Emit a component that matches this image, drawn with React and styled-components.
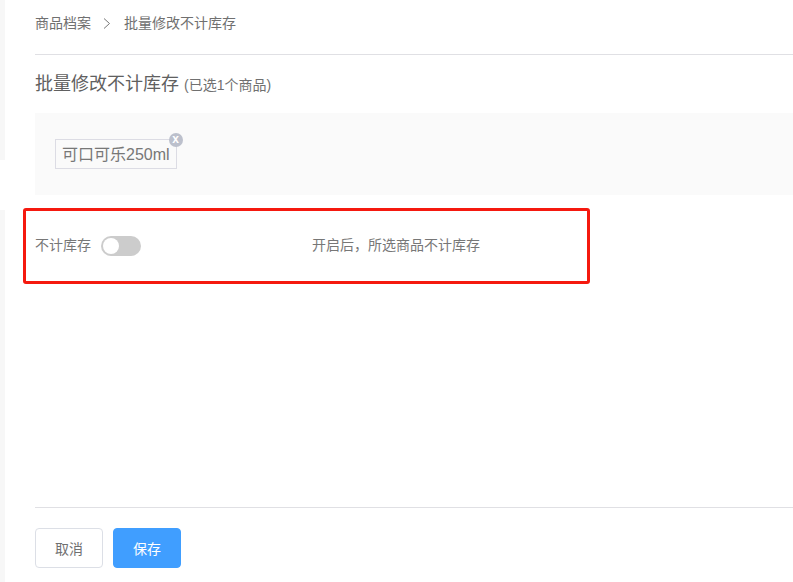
import React from "react";
import styled, { createGlobalStyle } from "styled-components";

const Global = createGlobalStyle`
  html, body { margin: 0; padding: 0; background: #fff; overflow: hidden; }
  * { box-sizing: border-box; }
  body { font-family: "Liberation Sans", "Noto Sans CJK SC", sans-serif; color: #666; }
`;

const Page = styled.div`
  width: 793px;
  height: 582px;
  display: flex;
  overflow: hidden;
`;

const Rail = styled.div`
  width: 5px;
  flex: none;
  display: flex;
  flex-direction: column;
  gap: 50px;
`;

const RailPiece = styled.div`
  background: #f7f7f7;
  height: ${(p) => p.$h}px;
  flex: none;
`;

const Main = styled.div`
  flex: 1;
  min-width: 0;
  display: flex;
  flex-direction: column;
  padding-left: 30px;
`;

const Crumbs = styled.nav`
  height: 55px;
  flex: none;
  border-bottom: 1px solid #e0e0e4;
  display: flex;
  align-items: flex-start;
  padding-top: 14px;
  font-size: 14px;
  line-height: 18px;
  color: #707070;
`;

const Chevron = styled.svg`
  width: 8px;
  height: 11px;
  margin: 4px 13px 0 12px;
  flex: none;
`;

const Heading = styled.div`
  height: 58px;
  flex: none;
  padding-top: 17px;
  display: flex;
  align-items: baseline;
  color: #606060;
  font-size: 18px;
  line-height: 24px;
`;

const HeadingNote = styled.span`
  font-size: 14px;
  margin-left: 5px;
  color: #707070;
`;

const GoodsPanel = styled.div`
  height: 82px;
  flex: none;
  background: #fafafa;
  padding: 26px 20px 0;
  display: flex;
  align-items: flex-start;
`;

const Tag = styled.div`
  position: relative;
  height: 30px;
  padding: 0 6px;
  border: 1px solid #dcdce4;
  font-size: 16px;
  line-height: 29px;
  color: #777;
`;

const TagClose = styled.span`
  position: absolute;
  top: -7px;
  right: -7px;
  width: 14px;
  height: 14px;
  border-radius: 50%;
  background: #bcc0cc;
  color: #fff;
  font-size: 12px;
  font-weight: 700;
  line-height: 13px;
  text-align: center;
`;

const Highlighted = styled.div`
  width: 555px;
  flex: none;
  position: relative;
  height: 50px;
  display: flex;
  align-items: center;
  font-size: 14px;
  line-height: 18px;
  color: #777;
  margin-top: 26px;

  &::after {
    content: "";
    position: absolute;
    left: -12px;
    right: 0;
    top: -13px;
    bottom: -13px;
    border: 3px solid #f5190f;
    border-radius: 3px;
    pointer-events: none;
  }
`;

const SwitchLabel = styled.span`
  width: 66px;
  flex: none;
  margin-top: -3px;
`;

const Toggle = styled.span`
  width: 40px;
  height: 20px;
  flex: none;
  border-radius: 10px;
  background: #ccc;
  padding: 2px;
  display: flex;
`;

const Knob = styled.span`
  width: 16px;
  height: 16px;
  border-radius: 50%;
  background: #fff;
`;

const Hint = styled.span`
  margin-left: 171px;
  margin-top: -3px;
`;

const Spacer = styled.div`
  flex: 1;
`;

const Footer = styled.div`
  flex: none;
  height: 75px;
  border-top: 1px solid #e0e0e4;
  padding-top: 20px;
  display: flex;
  align-items: flex-start;
  gap: 10px;
`;

const Button = styled.button`
  width: 68px;
  height: 40px;
  border-radius: 4px;
  font: inherit;
  font-size: 14px;
  padding: 0;
  border: 1px solid ${(p) => (p.$primary ? "#409eff" : "#dcdfe6")};
  background: ${(p) => (p.$primary ? "#409eff" : "#fff")};
  color: ${(p) => (p.$primary ? "#fff" : "#707070")};
`;

export default function App() {
  return (
    <Page>
      <Global />
      <Rail>
        <RailPiece $h={160} />
        <RailPiece $h={372} />
      </Rail>
      <Main>
        <Crumbs>
          <span>商品档案</span>
          <Chevron viewBox="0 0 8 11" fill="none" stroke="#777" strokeWidth="1">
            <path d="M1 .5 6.5 5.5 1 10.5" />
          </Chevron>
          <span>批量修改不计库存</span>
        </Crumbs>
        <Heading>
          批量修改不计库存<HeadingNote>(已选1个商品)</HeadingNote>
        </Heading>
        <GoodsPanel>
          <Tag>
            可口可乐250ml
            <TagClose>x</TagClose>
          </Tag>
        </GoodsPanel>
        <Highlighted>
          <SwitchLabel>不计库存</SwitchLabel>
          <Toggle>
            <Knob />
          </Toggle>
          <Hint>开启后，所选商品不计库存</Hint>
        </Highlighted>
        <Spacer />
        <Footer>
          <Button>取消</Button>
          <Button $primary>保存</Button>
        </Footer>
      </Main>
    </Page>
  );
}
